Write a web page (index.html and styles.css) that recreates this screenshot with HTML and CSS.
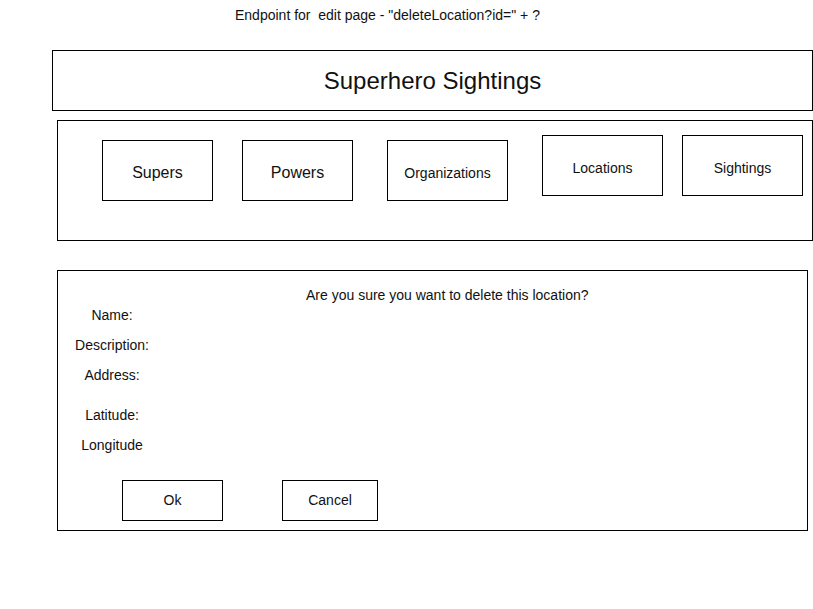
FILE: index.html
```html
<!DOCTYPE html>
<html>
<head>
<meta charset="utf-8">
<title>Delete Location</title>
<link rel="stylesheet" href="styles.css">
</head>
<body>
<div class="endpoint">Endpoint for  edit page - "deleteLocation?id=" + ?</div>
<div class="header">Superhero Sightings</div>
<div class="nav">
  <div class="nav-btn btn-supers">Supers</div>
  <div class="nav-btn btn-powers">Powers</div>
  <div class="nav-btn btn-orgs">Organizations</div>
  <div class="nav-btn btn-locations">Locations</div>
  <div class="nav-btn btn-sightings">Sightings</div>
</div>
<div class="confirm">
  <div class="question">Are you sure you want to delete this location?</div>
  <div class="fields">
    <div class="field">Name:</div>
    <div class="field">Description:</div>
    <div class="field">Address:</div>
    <div class="field field-gap">Latitude:</div>
    <div class="field">Longitude</div>
  </div>
  <div class="actions">
    <div class="action action-ok">Ok</div>
    <div class="action action-cancel">Cancel</div>
  </div>
</div>
</body>
</html>
```
FILE: styles.css
```css
* { box-sizing: border-box; }
body {
  margin: 0;
  background: #fff;
  color: #111;
  font-family: "Liberation Sans", Arial, sans-serif;
  font-size: 14px;
  line-height: 16px;
}
.endpoint {
  margin: 7px 0 0 235px;
  height: 16px;
  white-space: pre;
}
.header {
  margin: 27px 0 0 52px;
  width: 761px;
  height: 61px;
  border: 1px solid #000;
  display: flex;
  align-items: center;
  justify-content: center;
  font-size: 24px;
  line-height: 28px;
}
.nav {
  margin: 9px 0 0 57px;
  width: 756px;
  height: 121px;
  border: 1px solid #000;
  display: flex;
  align-items: flex-start;
  padding: 14px 0 0 44px;
}
.nav-btn {
  height: 61px;
  border: 1px solid #000;
  display: flex;
  align-items: center;
  justify-content: center;
  padding-top: 4px;
  font-size: 14px;
  flex: none;
}
.btn-supers { width: 111px; margin-top: 5px; font-size: 16px; }
.btn-powers { width: 111px; margin-top: 5px; margin-left: 29px; font-size: 16px; }
.btn-orgs { width: 121px; margin-top: 5px; margin-left: 34px; }
.btn-locations { width: 121px; margin-left: 34px; }
.btn-sightings { width: 121px; margin-left: 19px; }
.confirm {
  margin: 29px 0 0 57px;
  width: 751px;
  height: 261px;
  border: 1px solid #000;
}
.question {
  margin: 16px 0 0 248px;
}
.fields {
  width: 108px;
  margin-top: 4px;
  display: flex;
  flex-direction: column;
  gap: 14px;
  text-align: center;
}
.field-gap { margin-top: 10px; }
.actions {
  display: flex;
  margin: 27px 0 0 64px;
}
.action {
  height: 41px;
  border: 1px solid #000;
  display: flex;
  align-items: center;
  justify-content: center;
  padding-bottom: 1px;
}
.action-ok { width: 101px; }
.action-cancel { width: 96px; margin-left: 59px; }
```
